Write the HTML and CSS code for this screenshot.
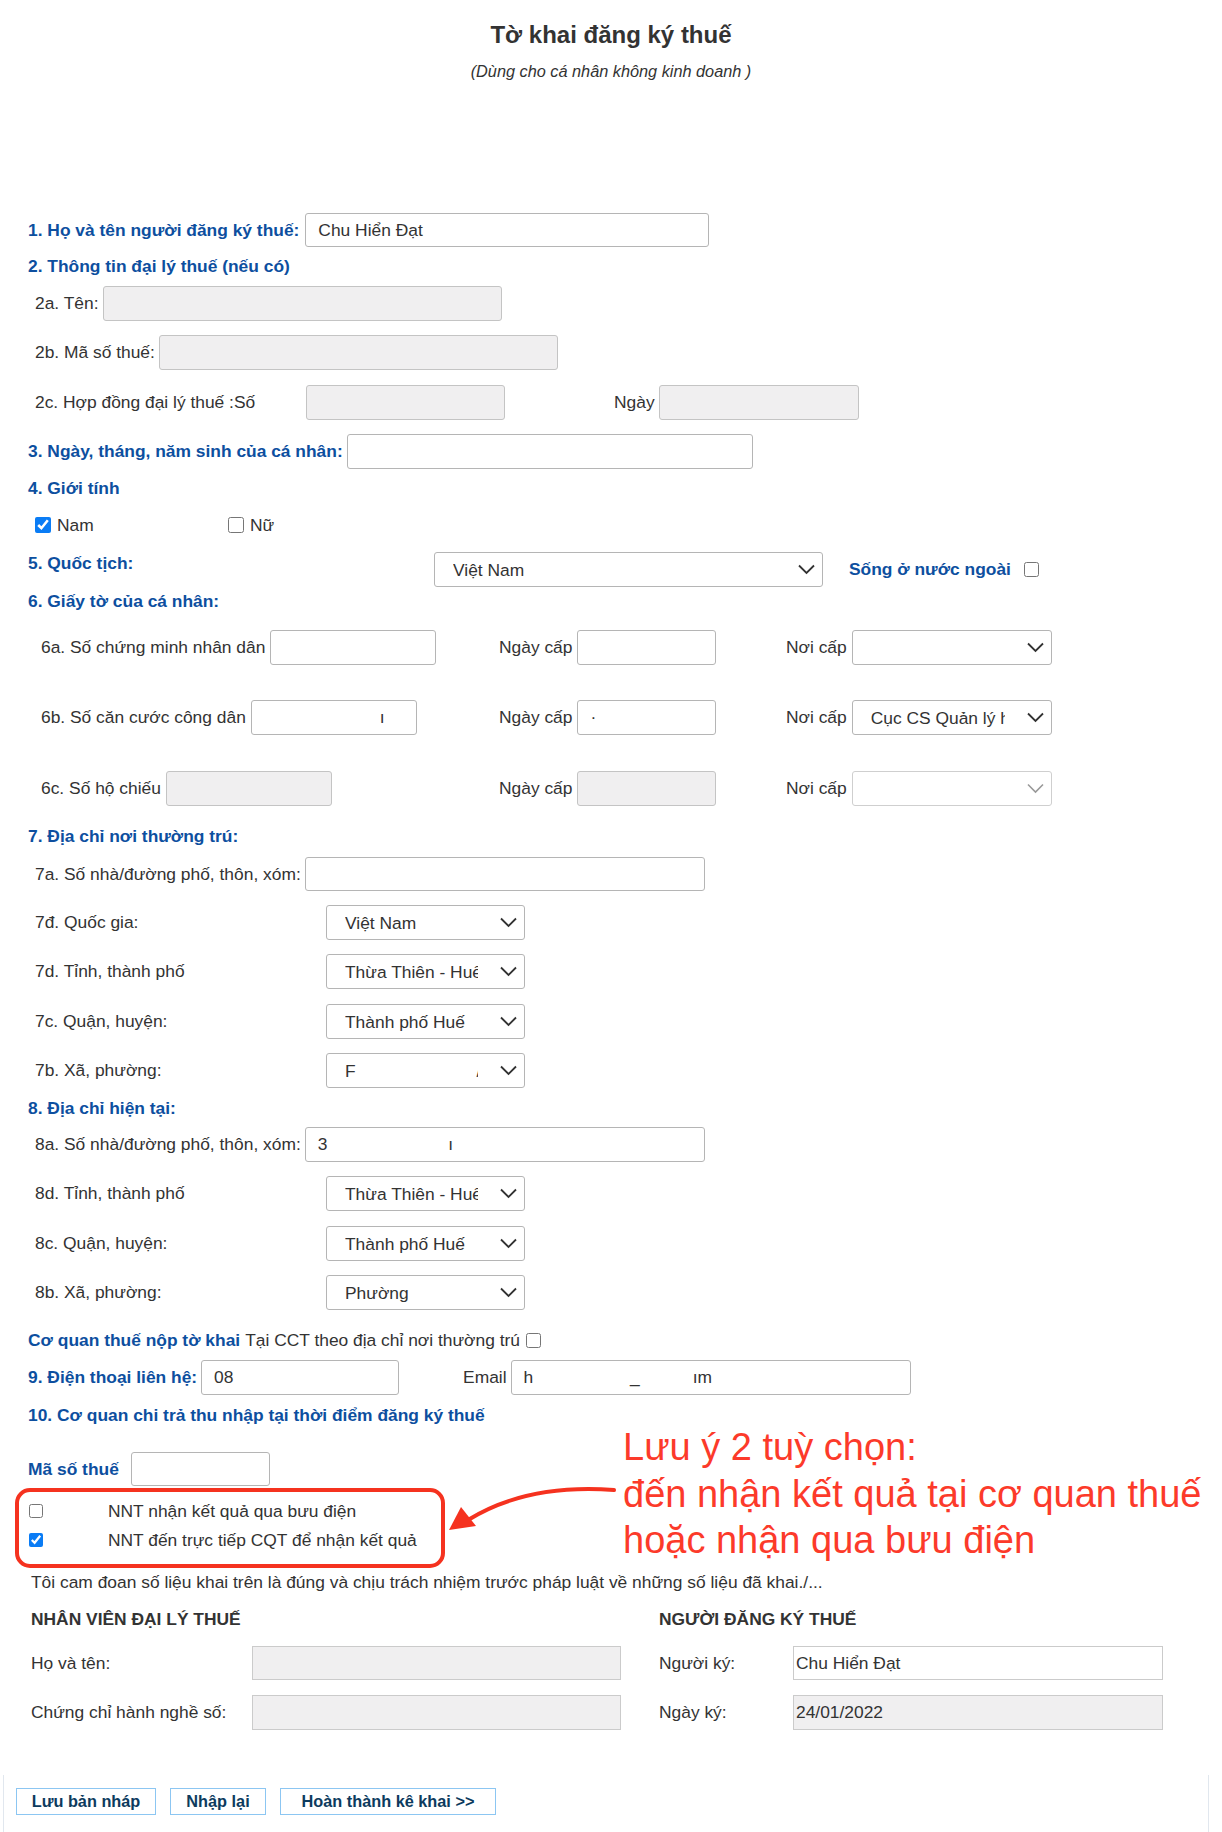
FILE: index.html
```html
<!DOCTYPE html>
<html lang="vi">
<head>
    <meta charset="UTF-8">
    <meta name="viewport" content="width=device-width, initial-scale=1.0">
    <title>Tờ khai đăng ký thuế</title>
    <link rel="stylesheet" href="styles.css">
</head>
<body>
<div class="page">
    <div class="header">
        <h1>Tờ khai đăng ký thuế</h1>
        <p class="subtitle">(Dùng cho cá nhân không kinh doanh )</p>
    </div>

    <form class="tax-form">
        <!-- 1. Ho ten -->
        <div class="row h34 first">
            <label class="caption">1. Họ và tên người đăng ký thuế:</label>
            <input type="text" class="field w404" value="Chu Hiển Đạt">
        </div>

        <!-- 2. Dai ly thue -->
        <div class="caption heading mt-9">2. Thông tin đại lý thuế (nếu có)</div>
        <div class="row sub mt-10">
            <label>2a. Tên:</label>
            <input type="text" class="field w399" disabled>
        </div>
        <div class="row sub">
            <label>2b. Mã số thuế:</label>
            <input type="text" class="field w399" disabled>
        </div>
        <div class="row sub mt-15">
            <label class="lbl-contract">2c. Hợp đồng đại lý thuế :Số</label>
            <input type="text" class="field w199" disabled>
            <label class="lbl-day">Ngày</label>
            <input type="text" class="field w200" disabled>
        </div>

        <!-- 3. Ngay sinh -->
        <div class="row">
            <label class="caption">3. Ngày, tháng, năm sinh của cá nhân:</label>
            <input type="text" class="field w406">
        </div>

        <!-- 4. Gioi tinh -->
        <div class="caption heading mt-9">4. Giới tính</div>
        <div class="line sub mt-17">
            <label class="gender"><input type="checkbox" class="check big" checked>Nam</label>
            <label class="gender"><input type="checkbox" class="check big">Nữ</label>
        </div>

        <!-- 5. Quoc tich -->
        <div class="row mt-17">
            <label class="caption lbl-nation">5. Quốc tịch:</label>
            <select class="select w389"><option>Việt Nam</option></select>
            <label class="caption abroad">Sống ở nước ngoài</label>
            <input type="checkbox" class="check">
        </div>

        <!-- 6. Giay to -->
        <div class="caption heading mt-4">6. Giấy tờ của cá nhân:</div>
        <div class="doc-row mt-19">
            <div class="cell"><label>6a. Số chứng minh nhân dân</label><input type="text" class="field w166"></div>
            <div class="cell"><label>Ngày cấp</label><input type="text" class="field w139"></div>
            <div class="cell"><label>Nơi cấp</label><select class="select w200"><option></option></select></div>
        </div>
        <div class="doc-row mt-35">
            <div class="cell"><label>6b. Số căn cước công dân</label><input type="text" class="field w166" value="                        ı"></div>
            <div class="cell"><label>Ngày cấp</label><input type="text" class="field w139" value="·"></div>
            <div class="cell"><label>Nơi cấp</label><select class="select w200"><option>Cục CS Quản lý hành chính về TTXH</option></select></div>
        </div>
        <div class="doc-row mt-36">
            <div class="cell"><label>6c. Số hộ chiếu</label><input type="text" class="field w166" disabled></div>
            <div class="cell"><label>Ngày cấp</label><input type="text" class="field w139" disabled></div>
            <div class="cell"><label>Nơi cấp</label><select class="select w200" disabled><option></option></select></div>
        </div>

        <!-- 7. Thuong tru -->
        <div class="caption heading mt-20">7. Địa chỉ nơi thường trú:</div>
        <div class="row sub h34 mt-11">
            <label>7a. Số nhà/đường phố, thôn, xóm:</label>
            <input type="text" class="field w400">
        </div>
        <div class="row sub">
            <label class="lbl-addr">7đ. Quốc gia:</label>
            <select class="select w199"><option>Việt Nam</option></select>
        </div>
        <div class="row sub">
            <label class="lbl-addr">7d. Tỉnh, thành phố</label>
            <select class="select w199"><option>Thừa Thiên - Huế</option></select>
        </div>
        <div class="row sub mt-15">
            <label class="lbl-addr">7c. Quận, huyện:</label>
            <select class="select w199"><option>Thành phố Huế</option></select>
        </div>
        <div class="row sub">
            <label class="lbl-addr">7b. Xã, phường:</label>
            <select class="select w199"><option>F&nbsp;&nbsp;&nbsp;&nbsp;&nbsp;&nbsp;&nbsp;&nbsp;&nbsp;&nbsp;&nbsp;&nbsp;&nbsp;&nbsp;&nbsp;&nbsp;&nbsp;&nbsp;&nbsp;&nbsp;&nbsp;&nbsp;&nbsp;&nbsp;&nbsp;/</option></select>
        </div>

        <!-- 8. Hien tai -->
        <div class="caption heading">8. Địa chỉ hiện tại:</div>
        <div class="row sub mt-9">
            <label>8a. Số nhà/đường phố, thôn, xóm:</label>
            <input type="text" class="field w400" value="3                         ı">
        </div>
        <div class="row sub">
            <label class="lbl-addr">8d. Tỉnh, thành phố</label>
            <select class="select w199"><option>Thừa Thiên - Huế</option></select>
        </div>
        <div class="row sub mt-15">
            <label class="lbl-addr">8c. Quận, huyện:</label>
            <select class="select w199"><option>Thành phố Huế</option></select>
        </div>
        <div class="row sub">
            <label class="lbl-addr">8b. Xã, phường:</label>
            <select class="select w199"><option>Phường</option></select>
        </div>

        <div class="line mt-20">
            <span class="caption">Cơ quan thuế nộp tờ khai</span>
            <span class="cct">Tại CCT theo địa chỉ nơi thường trú</span>
            <input type="checkbox" class="check">
        </div>

        <!-- 9. Lien he -->
        <div class="row mt-10">
            <label class="caption">9. Điện thoại liên hệ:</label>
            <input type="text" class="field w198" value="08">
            <label class="lbl-email">Email</label>
            <input type="text" class="field w400" value="h                    _           ım">
        </div>

        <!-- 10. Co quan chi tra -->
        <div class="caption heading">10. Cơ quan chi trả thu nhập tại thời điểm đăng ký thuế</div>
        <div class="row h34 mt-27">
            <label class="caption lbl-mst">Mã số thuế</label>
            <input type="text" class="field w139">
        </div>

        <div class="receive">
            <div class="line mt-15">
                <input type="checkbox" class="check small">
                <span class="receive-text">NNT nhận kết quả qua bưu điện</span>
            </div>
            <div class="line mt-9">
                <input type="checkbox" class="check small" checked>
                <span class="receive-text">NNT đến trực tiếp CQT để nhận kết quả</span>
            </div>
        </div>

        <p class="statement">Tôi cam đoan số liệu khai trên là đúng và chịu trách nhiệm trước pháp luật về những số liệu đã khai./...</p>

        <div class="sign">
            <div class="sign-col">
                <div class="sign-title">NHÂN VIÊN ĐẠI LÝ THUẾ</div>
                <div class="sign-row h34">
                    <label class="sign-label left">Họ và tên:</label>
                    <input type="text" class="sign-field w369" disabled>
                </div>
                <div class="sign-row mt-15">
                    <label class="sign-label left">Chứng chỉ hành nghề số:</label>
                    <input type="text" class="sign-field w369" disabled>
                </div>
            </div>
            <div class="sign-col">
                <div class="sign-title">NGƯỜI ĐĂNG KÝ THUẾ</div>
                <div class="sign-row h34">
                    <label class="sign-label right">Người ký:</label>
                    <input type="text" class="sign-field w370" value="Chu Hiển Đạt">
                </div>
                <div class="sign-row mt-15">
                    <label class="sign-label right">Ngày ký:</label>
                    <input type="text" class="sign-field w370" value="24/01/2022" disabled>
                </div>
            </div>
        </div>

        <div class="actions">
            <button type="button" class="btn w140">Lưu bản nháp</button>
            <button type="button" class="btn w96">Nhập lại</button>
            <button type="button" class="btn w216">Hoàn thành kê khai &gt;&gt;</button>
        </div>
    </form>

    <!-- annotation over the screenshot -->
    <div class="note-box"></div>
    <svg class="note-arrow" width="180" height="60" viewBox="0 0 180 60">
        <path d="M174 10 C 120 6, 70 14, 28 40" fill="none" stroke="#f5321f" stroke-width="4" stroke-linecap="round"/>
        <polygon points="9,50 21,27 36,46" fill="#f5321f"/>
    </svg>
    <div class="note-text">Lưu ý 2 tuỳ chọn:<br>đến nhận kết quả tại cơ quan thuế<br>hoặc nhận qua bưu điện</div>
</div>
</body>
</html>
```

FILE: styles.css
```css
/* Reset */
* {
    box-sizing: border-box;
}

body {
    margin: 0;
    font-family: "Liberation Sans", Arial, Helvetica, sans-serif;
    font-size: 17.4px;
    color: #333;
    background-color: #fff;
}

.page {
    position: relative;
    width: 1222px;
    min-height: 1832px;
}

/* Header */
.header {
    text-align: center;
    padding-top: 21px;
}

h1 {
    margin: 0;
    font-size: 24px;
    line-height: 28px;
    color: #333;
}

.subtitle {
    margin: 12px 0 0;
    font-size: 16.3px;
    line-height: 20px;
    font-style: italic;
}

/* Form rows */
.tax-form {
    margin-top: 132px;
}

.row {
    display: flex;
    align-items: center;
    gap: 4px;
    height: 35px;
    margin-top: 14px;
    padding-left: 28px;
}

.row.h34 {
    height: 34px;
}

.row.first {
    margin-top: 0;
    gap: 6px;
}

.line {
    display: flex;
    align-items: center;
    height: 20px;
    padding-left: 28px;
}

.sub {
    padding-left: 35px;
}

.caption {
    color: #0d4f9f;
    font-weight: bold;
}

.heading {
    line-height: 20px;
    margin-top: 10px;
    padding-left: 28px;
}

.mt-4 { margin-top: 4px; }
.mt-9 { margin-top: 9px; }
.mt-10 { margin-top: 10px; }
.mt-11 { margin-top: 11px; }
.mt-15 { margin-top: 15px; }
.mt-17 { margin-top: 17px; }
.mt-19 { margin-top: 19px; }
.mt-20 { margin-top: 20px; }
.mt-27 { margin-top: 27px; }
.mt-35 { margin-top: 35px; }
.mt-36 { margin-top: 36px; }

/* Inputs */
.field {
    height: 100%;
    border: 1px solid #b5b5b5;
    border-radius: 3px;
    padding: 0 12px;
    font: inherit;
    color: #333;
    background-color: #fff;
}

.field:disabled {
    background-color: #f0eff0;
    border-color: #c4c4c4;
}

.select {
    -webkit-appearance: none;
    appearance: none;
    height: 35px;
    border: 1px solid #b5b5b5;
    border-radius: 3px;
    padding: 0 46px 0 18px;
    font: inherit;
    color: #333;
    background: #fff url("data:image/svg+xml;utf8,<svg xmlns='http://www.w3.org/2000/svg' width='17' height='11' viewBox='0 0 17 11'><path d='M1 1.5l7.5 7.5 7.5-7.5' fill='none' stroke='%23333' stroke-width='1.8'/></svg>") no-repeat right 7px center;
}

.select:disabled {
    opacity: 1;
    border-color: #cfcfcf;
    background-image: url("data:image/svg+xml;utf8,<svg xmlns='http://www.w3.org/2000/svg' width='17' height='11' viewBox='0 0 17 11'><path d='M1 1.5l7.5 7.5 7.5-7.5' fill='none' stroke='%23999' stroke-width='1.6'/></svg>");
}

.w139 { width: 139px; }
.w166 { width: 166px; }
.w198 { width: 198px; }
.w199 { width: 199px; }
.w200 { width: 200px; }
.w369 { width: 369px; }
.w370 { width: 370px; }
.w389 { width: 389px; }
.w399 { width: 399px; }
.w400 { width: 400px; }
.w404 { width: 404px; }
.w406 { width: 406px; }

.check {
    width: 15px;
    height: 15px;
    margin: 0;
    accent-color: #0a7cf5;
}

.check.big {
    width: 16px;
    height: 16px;
    margin-right: 6px;
}

.check.small {
    width: 14px;
    height: 14px;
    margin-left: 1px;
}

/* Specific labels */
.lbl-contract {
    width: 267px;
}

.lbl-day {
    margin-left: 105px;
}

.lbl-nation {
    width: 402px;
    align-self: flex-start;
    margin-top: 1px;
    line-height: 20px;
}

.abroad {
    margin-left: 22px;
    margin-right: 9px;
}

.lbl-addr {
    width: 287px;
}

.lbl-email {
    margin-left: 60px;
}

.lbl-mst {
    margin-right: 8px;
}

.gender {
    display: flex;
    align-items: center;
    width: 193px;
}

.cct {
    margin-left: 5px;
    margin-right: 6px;
}

/* Section 6 grid */
.doc-row {
    display: grid;
    grid-template-columns: 458px 287px auto;
    align-items: center;
    height: 35px;
    padding-left: 41px;
}

.cell {
    display: flex;
    align-items: center;
    gap: 5px;
    height: 35px;
}

/* Receive options */
.receive-text {
    margin-left: 65px;
}

.statement {
    margin: 22px 0 0;
    padding-left: 31px;
    line-height: 20px;
}

/* Sign block */
.sign {
    display: grid;
    grid-template-columns: 590px auto;
    column-gap: 38px;
    padding-left: 31px;
    margin-top: 17px;
}

.sign-col {
    display: flex;
    flex-direction: column;
}

.sign-title {
    font-weight: bold;
    line-height: 20px;
}

.sign-row {
    display: flex;
    align-items: center;
    height: 35px;
    margin-top: 17px;
}

.sign-row.h34 {
    height: 34px;
}

.sign-row.mt-15 {
    margin-top: 15px;
}

.sign-label.left {
    width: 221px;
}

.sign-label.right {
    width: 134px;
}

.sign-field {
    height: 100%;
    border: 1px solid #cbcbcb;
    border-radius: 0;
    padding: 0 2px;
    font: inherit;
    color: #333;
    background-color: #fff;
}

.sign-field:disabled {
    background-color: #f0eff0;
    color: #333;
}

/* Buttons */
.actions {
    display: flex;
    align-items: flex-start;
    gap: 14px;
    width: 1206px;
    min-height: 57px;
    margin: 45px 0 0 3px;
    padding: 13px 0 0 12px;
    border-left: 1px solid #e1e7ee;
    border-right: 1px solid #e1e7ee;
}

.btn {
    height: 27px;
    padding: 0;
    border: 1.5px solid #8cc6f2;
    background-color: #fff;
    color: #0d3b5e;
    font-family: inherit;
    font-size: 16.3px;
    font-weight: bold;
    cursor: pointer;
}

.w96 { width: 96px; }
.w140 { width: 140px; }
.w216 { width: 216px; }

/* Red annotation */
.note-box {
    position: absolute;
    left: 15px;
    top: 1488px;
    width: 430px;
    height: 80px;
    border: 4px solid #f5321f;
    border-radius: 15px;
}

.note-arrow {
    position: absolute;
    left: 440px;
    top: 1480px;
}

.note-text {
    position: absolute;
    left: 623px;
    top: 1424px;
    font-size: 38px;
    line-height: 46.5px;
    color: #fc3a2a;
}
```
